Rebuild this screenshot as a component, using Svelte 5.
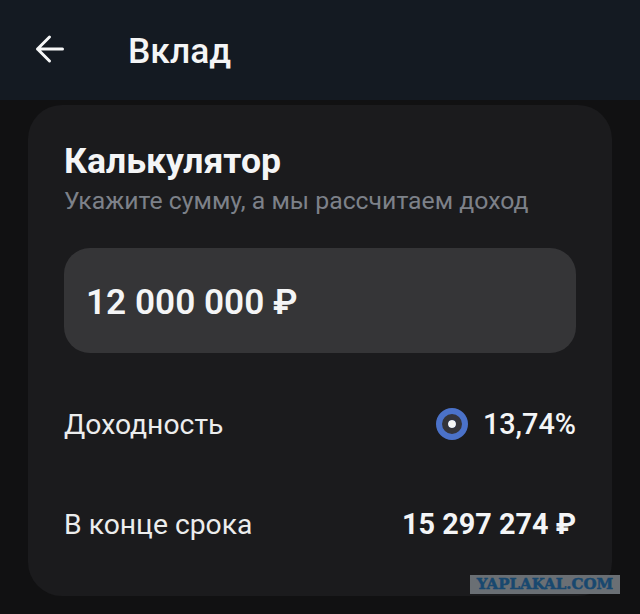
<script lang="ts">
	const rows = [
		{ label: 'Доходность', value: '13,74%', rate: true },
		{ label: 'В конце срока', value: '15 297 274 ₽', rate: false }
	];
</script>

<div class="page">
	<header class="topbar">
		<button class="back" type="button" aria-label="Назад">
			<svg width="30" height="30" viewBox="0 0 30 30" fill="none" aria-hidden="true">
				<path
					d="M27.5 15H2.5M14.5 3 2.5 15l12 12"
					stroke="currentColor"
					stroke-width="3"
					stroke-linecap="round"
					stroke-linejoin="round"
				/>
			</svg>
		</button>
		<h1>Вклад</h1>
	</header>

	<section class="card">
		<h2>Калькулятор</h2>
		<p class="hint">Укажите сумму, а мы рассчитаем доход</p>

		<div class="amount">12 000 000 ₽</div>

		<div class="rows">
			{#each rows as row}
				<div class="row">
					<span class="label">{row.label}</span>
					<span class="value" class:rate={row.rate}>
						{#if row.rate}
							<span class="dot" aria-hidden="true"></span>
						{/if}
						{row.value}
					</span>
				</div>
			{/each}
		</div>
	</section>

	<div class="stamp">YAPLAKAL.COM</div>
</div>

<style>
	:global(body) {
		margin: 0;
		background: #111112;
	}

	.page {
		position: relative;
		height: 614px;
		overflow: hidden;
		background: #111112;
		font-family: Roboto, 'Liberation Sans', sans-serif;
		color: #f4f5f6;
	}

	.topbar {
		display: flex;
		align-items: center;
		gap: 64px;
		height: 100px;
		padding-left: 35px;
		box-sizing: border-box;
		background: #141a22;
	}

	.back {
		display: flex;
		padding: 0;
		border: 0;
		background: none;
		color: #f6f7f8;
		margin-top: -3px;
	}

	h1 {
		margin: 3px 0 0 -1px;
		font-size: 35.4px;
		font-weight: 500;
		line-height: 1;
	}

	.card {
		margin: 5px 28px 0;
		height: 491px;
		box-sizing: border-box;
		padding: 36px 36px 0;
		border-radius: 34px;
		background: #1b1b1d;
	}

	h2 {
		margin: 0;
		font-size: 35.6px;
		font-weight: 700;
		line-height: 40px;
	}

	.hint {
		margin: 5px 0 0;
		font-size: 24.8px;
		line-height: 30px;
		color: #7d8189;
	}

	.amount {
		display: flex;
		align-items: center;
		height: 105px;
		box-sizing: border-box;
		margin-top: 32px;
		padding: 3px 0 0 22px;
		border-radius: 26px;
		background: #353537;
		font-size: 35.2px;
		font-weight: 600;
	}

	.rows {
		display: flex;
		flex-direction: column;
		gap: 62px;
		margin-top: 52px;
	}

	.row {
		display: flex;
		justify-content: space-between;
		align-items: center;
		height: 38px;
	}

	.label {
		font-size: 28.3px;
		color: #eceded;
	}

	.value {
		display: flex;
		align-items: center;
		gap: 15px;
		font-size: 28.8px;
		font-weight: 700;
	}

	.value.rate {
		font-weight: 500;
	}

	.dot {
		position: relative;
		width: 8px;
		height: 8px;
		border: 12px solid #4b72c9;
		border-radius: 50%;
		background: #f4f5f6;
	}

	.dot::after {
		content: '';
		position: absolute;
		inset: -6px;
		border: 6px solid #34343a;
		border-radius: 50%;
	}

	.stamp {
		position: absolute;
		left: 470px;
		top: 575px;
		width: 150px;
		height: 19px;
		background: #6a6f74;
		color: #18486f;
		font-family: 'DejaVu Serif', serif;
		font-size: 15px;
		font-weight: 700;
		line-height: 19px;
		text-align: center;
		-webkit-text-stroke: 0.5px #18486f;
	}
</style>
